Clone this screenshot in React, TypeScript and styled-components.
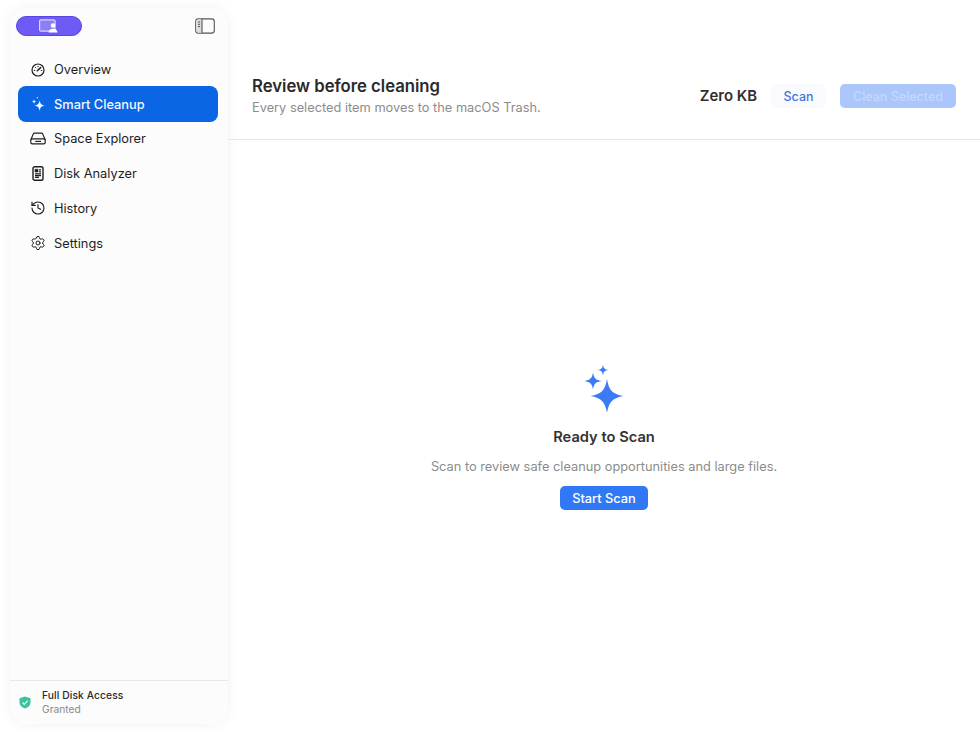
import React from "react";
import styled, { createGlobalStyle } from "styled-components";
import { History, Settings } from "lucide-react";

const GlobalStyle = createGlobalStyle`
  html, body {
    margin: 0;
    padding: 0;
    height: 100%;
    background: #ffffff;
    font-family: Inter, "Liberation Sans", sans-serif;
    -webkit-font-smoothing: antialiased;
  }
  #root {
    height: 100%;
  }
  * {
    box-sizing: border-box;
  }
`;

const Shell = styled.div`
  display: flex;
  width: 980px;
  height: 732px;
  overflow: hidden;
  background: #ffffff;
`;

const Sidebar = styled.aside`
  flex: none;
  display: flex;
  flex-direction: column;
  width: 218px;
  margin: 8px 0 8px 10px;
  background: #fcfcfc;
  border-radius: 18px;
  box-shadow: 0 0 14px rgba(0, 0, 0, 0.06);
`;

const SidebarTop = styled.div`
  display: flex;
  align-items: center;
  justify-content: space-between;
  height: 36px;
  padding: 0 13px 0 6px;
`;

const Brand = styled.div`
  display: flex;
  align-items: center;
  justify-content: center;
  width: 66px;
  height: 20px;
  background: #6e5af5;
  border: 1px solid #5b45e0;
  border-radius: 10px;
`;

const ToggleButton = styled.div`
  display: flex;
  color: #555555;
`;

const NavList = styled.nav`
  display: flex;
  flex-direction: column;
  padding: 7.5px 10px 0 8px;
`;

const NavItem = styled.div<{ $active?: boolean }>`
  display: flex;
  align-items: center;
  gap: 8px;
  height: 36px;
  margin-bottom: -1.3px;
  padding: 0 12px 0 11px;
  border-radius: 8px;
  font-size: 12.8px;
  line-height: 18px;
  font-weight: ${({ $active }) => ($active ? 500 : 400)};
  color: ${({ $active }) => ($active ? "#f4f8ff" : "#1e1e1e")};
  background: ${({ $active }) => ($active ? "#0a66e4" : "transparent")};
`;

const NavLabel = styled.span`
  padding-top: 1px;
`;

const NavIcon = styled.span`
  display: flex;
  align-items: center;
  justify-content: center;
  width: 17px;
  height: 17px;
`;

const Spacer = styled.div`
  flex: 1;
`;

const AccessRow = styled.div`
  display: flex;
  align-items: center;
  gap: 11px;
  height: 44px;
  padding: 0 9px;
  border-top: 1px solid #e8e8e8;
`;

const AccessText = styled.div`
  display: flex;
  flex-direction: column;
  gap: 3px;
`;

const AccessTitle = styled.div`
  font-size: 10.25px;
  line-height: 11px;
  font-weight: 500;
  letter-spacing: 0.1px;
  color: #2a2a2a;
`;

const AccessStatus = styled.div`
  font-size: 10.25px;
  line-height: 11px;
  color: #8a8a8a;
`;

const Main = styled.main`
  flex: 1;
  display: flex;
  flex-direction: column;
  min-width: 0;
`;

const Header = styled.header`
  flex: none;
  display: flex;
  align-items: flex-end;
  justify-content: space-between;
  height: 140px;
  padding: 0 24px 23px 24px;
  border-bottom: 1px solid #e6e6e6;
`;

const HeaderText = styled.div`
  display: flex;
  flex-direction: column;
  gap: 3px;
`;

const Title = styled.h1`
  margin: 0;
  font-size: 16.7px;
  line-height: 22px;
  font-weight: 600;
  color: #2a2a2a;
`;

const Subtitle = styled.p`
  margin: 0;
  font-size: 12.8px;
  line-height: 16px;
  color: #8c8c8c;
`;

const HeaderActions = styled.div`
  display: flex;
  align-items: center;
  margin-bottom: 8px;
`;

const Size = styled.span`
  font-size: 14.9px;
  font-weight: 600;
  color: #2e2e2e;
  margin-right: 14px;
`;

const ScanButton = styled.button`
  width: 55px;
  height: 24px;
  padding: 0;
  margin-right: 14px;
  border: none;
  border-radius: 7px;
  background: #f8fafe;
  color: #3f78dc;
  font: 500 12.4px Inter, sans-serif;
`;

const CleanButton = styled.button`
  width: 116px;
  height: 24px;
  padding: 0;
  border: none;
  border-radius: 5px;
  background: #aac6fb;
  color: #c5d8fa;
  font: 500 12.5px Inter, sans-serif;
`;

const Empty = styled.section`
  flex: 1;
  display: flex;
  flex-direction: column;
  align-items: center;
  padding-top: 224px;
`;

const EmptyTitle = styled.h2`
  margin: 16px 0 0;
  font-size: 14.7px;
  line-height: 18px;
  font-weight: 600;
  color: #333333;
`;

const EmptyText = styled.p`
  margin: 13px 0 0;
  font-size: 12.8px;
  line-height: 16px;
  color: #8c8c8c;
`;

const StartButton = styled.button`
  width: 88px;
  height: 24px;
  margin-top: 11px;
  padding: 0;
  border: none;
  border-radius: 5px;
  background: #3078f6;
  color: #ffffff;
  font: 500 12.8px Inter, sans-serif;
`;

const BrandIcon = () => (
  <svg width="20" height="14" viewBox="0 0 20 14" fill="none">
    <rect x="0.600" y="0.800" width="15.500" height="11.400" rx="1.500" stroke="#d9d4ff" strokeWidth="1.200" fill="#8d7df7" />
    <circle cx="14" cy="6.500" r="2.300" fill="#ffffff" />
    <path d="M9.600 13.500c0-2.400 1.900-3.700 4.400-3.700s4.400 1.300 4.400 3.700z" fill="#ffffff" />
  </svg>
);

const PanelIcon = () => (
  <svg width="20" height="16" viewBox="0 0 20 16" fill="none">
    <rect x="0.700" y="0.900" width="18.600" height="14.200" rx="2.600" stroke="currentColor" strokeWidth="1.100" />
    <path d="M1 3.500a2.500 2.500 0 0 1 2.500-2.300H7v13.600H3.500A2.500 2.500 0 0 1 1 12.500z" fill="#dcdcdc" />
    <path d="M7 1v14" stroke="currentColor" strokeWidth="1.100" />
    <path d="M3 4h2M3 6.300h2M3 8.600h2" stroke="currentColor" strokeWidth="1" />
  </svg>
);

const GaugeIcon = () => (
  <svg width="14" height="14" viewBox="0 0 14 14" fill="none" stroke="currentColor">
    <circle cx="7" cy="7" r="6" strokeWidth="1.200" />
    <path d="M6.300 7.700 9.600 4.600" strokeWidth="1.500" strokeLinecap="round" />
    <path d="M3.200 7.400h.6M4.300 4.400l.4.400M7 3.200v.6M10.200 7.400h.6" strokeWidth="1" strokeLinecap="round" />
  </svg>
);

const SparkIcon = () => (
  <svg width="16" height="16" viewBox="0 0 15 15" fill="currentColor">
    <path d="M9 4c.6 3.200 1.500 4.300 4.800 5-3.300.7-4.200 1.800-4.800 5-.6-3.200-1.500-4.300-4.800-5 3.300-.7 4.200-1.800 4.800-5z" />
    <path d="M3.800 3c.3 1.500.7 1.900 2.200 2.200-1.500.3-1.900.7-2.200 2.200-.3-1.500-.7-1.900-2.200-2.200 1.500-.3 1.900-.7 2.200-2.200z" />
    <path d="M6.800.5c.1.800.3 1 1.100 1.100-.8.100-1 .3-1.100 1.100-.1-.8-.3-1-1.100-1.100.8-.1 1-.3 1.100-1.100z" />
  </svg>
);

const DriveIcon = () => (
  <svg width="16" height="13" viewBox="0 0 15 12" fill="none" stroke="currentColor" strokeWidth="1.100">
    <path d="M.8 7.200 3 1.900C3.300 1.200 3.800.9 4.500.9h6c.7 0 1.200.3 1.500 1l2.200 5.300" />
    <rect x="0.700" y="6.400" width="13.600" height="4.600" rx="1.500" />
    <path d="M5.500 8.700h.8M7.300 8.700h.8M9.100 8.700h.8" strokeLinecap="round" />
  </svg>
);

const DocIcon = () => (
  <svg width="12" height="15" viewBox="0 0 12 15" fill="none" stroke="currentColor">
    <rect x="1" y="0.800" width="10" height="13.400" rx="1.800" strokeWidth="1.400" />
    <path d="M3 3.300h3v2.700H3z" fill="currentColor" strokeWidth="0.600" />
    <path d="M7 3.800h2M7 5.800h2M3 7.800h6M3 9.600h6M3 11.400h4" strokeWidth="1.200" />
  </svg>
);

const ShieldIcon = () => (
  <svg width="12" height="13" viewBox="0 0 12 13">
    <path d="M6 .5 11.500 2.200v4.300c0 3-2.300 5.100-5.500 6-3.200-.9-5.500-3-5.500-6V2.200z" fill="#3cc2a0" />
    <path d="M3.500 6.500 5.300 8.300 8.700 4.600" fill="none" stroke="#e4fbf4" strokeWidth="1.200" />
  </svg>
);

const StarsIcon = () => (
  <svg width="40" height="48" viewBox="0 0 40 48" fill="#3b7cf6">
    <path d="M23 15c1.800 11 5.300 15 16.500 17C28.300 34 24.800 38 23 49c-1.800-11-5.300-15-16.500-17C17.700 30 21.200 26 23 15z" />
    <path d="M9 8.500c.9 5.700 2.800 7.600 8.500 8.500-5.700.9-7.600 2.800-8.500 8.500-.9-5.700-2.800-7.600-8.500-8.500 5.700-.9 7.600-2.800 8.500-8.500z" />
    <path d="M19 .5c.5 3.600 1.500 4.900 5.500 5.500-4 .6-5 1.900-5.500 5.500-.5-3.600-1.500-4.900-5.500-5.500 4-.6 5-1.900 5.500-5.500z" />
  </svg>
);

const navItems = [
  { label: "Overview", icon: <GaugeIcon /> },
  { label: "Smart Cleanup", icon: <SparkIcon />, active: true },
  { label: "Space Explorer", icon: <DriveIcon /> },
  { label: "Disk Analyzer", icon: <DocIcon /> },
  { label: "History", icon: <History size={16} strokeWidth={1.7} /> },
  { label: "Settings", icon: <Settings size={16} strokeWidth={1.5} /> },
];

const App: React.FC = () => {
  return (
    <>
      <GlobalStyle />
      <Shell>
        <Sidebar>
          <SidebarTop>
            <Brand>
              <BrandIcon />
            </Brand>
            <ToggleButton>
              <PanelIcon />
            </ToggleButton>
          </SidebarTop>
          <NavList>
            {navItems.map((item) => (
              <NavItem key={item.label} $active={item.active}>
                <NavIcon>{item.icon}</NavIcon>
                <NavLabel>{item.label}</NavLabel>
              </NavItem>
            ))}
          </NavList>
          <Spacer />
          <AccessRow>
            <ShieldIcon />
            <AccessText>
              <AccessTitle>Full Disk Access</AccessTitle>
              <AccessStatus>Granted</AccessStatus>
            </AccessText>
          </AccessRow>
        </Sidebar>
        <Main>
          <Header>
            <HeaderText>
              <Title>Review before cleaning</Title>
              <Subtitle>Every selected item moves to the macOS Trash.</Subtitle>
            </HeaderText>
            <HeaderActions>
              <Size>Zero KB</Size>
              <ScanButton>Scan</ScanButton>
              <CleanButton>Clean Selected</CleanButton>
            </HeaderActions>
          </Header>
          <Empty>
            <StarsIcon />
            <EmptyTitle>Ready to Scan</EmptyTitle>
            <EmptyText>Scan to review safe cleanup opportunities and large files.</EmptyText>
            <StartButton>Start Scan</StartButton>
          </Empty>
        </Main>
      </Shell>
    </>
  );
};

export default App;
